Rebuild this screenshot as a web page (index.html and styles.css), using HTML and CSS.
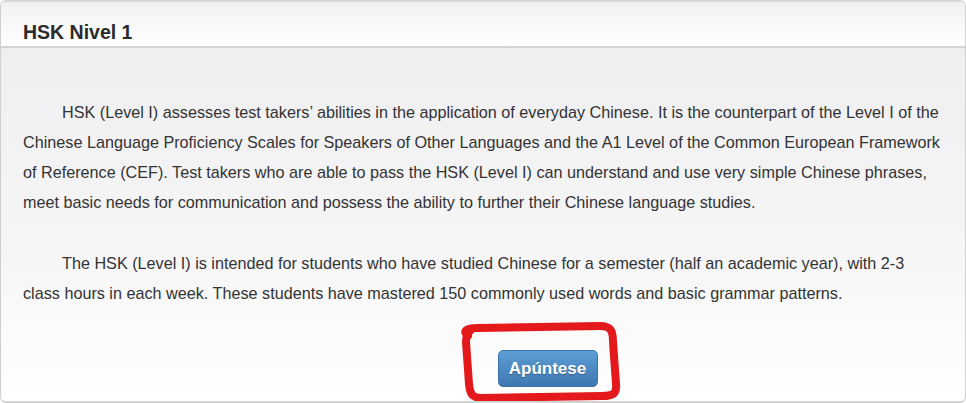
FILE: index.html
```html
<!DOCTYPE html>
<html>
    <head>
        <meta charset="utf-8">
        <title>HSK Nivel 1</title>
        <link rel="stylesheet" href="styles.css">
    </head>
    <body>
        <div id="panel">
            <div id="heading">
                <h2>HSK Nivel 1</h2>
            </div>
            <div id="content">
                <p>HSK (Level I) assesses test takers’ abilities in the application of everyday Chinese. It is the counterpart of the Level I of the Chinese Language Proficiency Scales for Speakers of Other Languages and the A1 Level of the Common European Framework of Reference (CEF). Test takers who are able to pass the HSK (Level I) can understand and use very simple Chinese phrases, meet basic needs for communication and possess the ability to further their Chinese language studies.</p>
                <p>The HSK (Level I) is intended for students who have studied Chinese for a semester (half an academic year), with 2-3 class hours in each week. These students have mastered 150 commonly used words and basic grammar patterns.</p>
                <div id="actions">
                    <button id="signup">Apúntese</button>
                </div>
            </div>
            <svg id="mark" width="966" height="403" viewBox="0 0 966 403">
                <path d="M468 336 C462 331 466 328 478 328 L600 326 C611 326 613 331 613 342 L616 384 C617 394 613 396 602 396 L482 398 C472 398 470 394 469 384 L466 342 C466 336 467 333 470 331" />
            </svg>
        </div>
    </body>
</html>
```

FILE: styles.css
```css
* {
    padding: 0;
    margin: 0;
    box-sizing: border-box;
}

body {
    font-family: "Liberation Sans", Arial, sans-serif;
    color: #333;
    background-color: #fff;
}

#panel {
    position: relative;
    width: 966px;
    height: 403px;
    border: 1px solid #cfcfcf;
    border-top: 2px solid #d6d6d6;
    border-bottom: 2px solid #d2d2d2;
    border-radius: 6px;
    overflow: hidden;
}

#heading {
    height: 46px;
    padding: 18px 22px 0;
    background: linear-gradient(#f1f1f1, #ffffff);
    border-bottom: 2px solid #d4d4d4;
}

#heading > h2 {
    font-size: 19.5px;
    line-height: 24px;
    font-weight: bold;
    color: #2b2b2b;
}

#content {
    height: 353px;
    padding: 49px 21px 0 22px;
    background: linear-gradient(#efeff1, #f6f6f7 60%, #ffffff);
}

#content > p {
    font-size: 16.2px;
    line-height: 30px;
    text-indent: 39px;
    margin-bottom: 31px;
}

#content > p:last-of-type {
    margin-bottom: 42px;
}

#actions {
    padding-left: 128px;
    text-align: center;
}

#signup {
    width: 100px;
    height: 37px;
    font-family: inherit;
    font-size: 17px;
    font-weight: bold;
    color: #fff;
    text-shadow: 0 1px 1px rgba(0,0,0,0.3);
    background: linear-gradient(#5d9dd5, #3f78b1);
    border: 1px solid #3d72a8;
    border-radius: 5px;
    cursor: pointer;
}

#mark {
    position: absolute;
    top: -2px;
    left: -1px;
    pointer-events: none;
}

#mark path {
    fill: none;
    stroke: #e3191c;
    stroke-width: 8;
    stroke-linecap: round;
    stroke-linejoin: round;
}
```
